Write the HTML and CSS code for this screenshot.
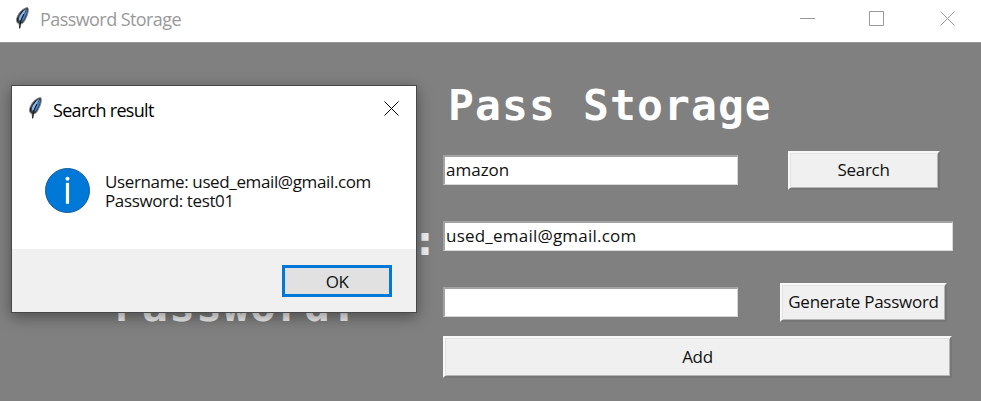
FILE: index.html
```
<!DOCTYPE html>
<html lang="en">
<head>
<meta charset="utf-8">
<title>Password Storage</title>
<link rel="stylesheet" href="styles.css">
</head>
<body>
<svg class="defs" width="0" height="0" aria-hidden="true">
  <symbol id="feather" viewBox="0 0 16 24">
    <path d="M13 .8C9 1.500 4 6 2.300 11c-1 2.700-1 5 .3 6.300l1.800 1.200L5 23l.9-4.500c2.400-.3 4.200-2.700 5.400-5.500 1.400-3 2.700-5.500 2.900-9C14.400 2 14 1 13 .8Z" fill="#3c4148" stroke="#85888b" stroke-width="1"/>
    <path d="M11.800 2.500C8.500 4.500 5.500 8 4.300 12l-.2 3 1.900-1C8 11 10 7 11.800 2.500Z" fill="#8fb9e8"/>
    <path d="M12.800 3C10 6.500 7.500 11 6.200 16.300c2.400-1 4-4 5.200-6.800.8-2 1.600-4 1.400-6.500Z" fill="#3f80cf"/>
    <path d="M9.500 8C7 12 5.400 16 4.900 23" fill="none" stroke="#111820" stroke-width="1.200"/>
    <path d="M2.800 11.500v4M8.500 4l-3 4.200" fill="none" stroke="#111820" stroke-width="1"/>
  </symbol>
</svg>
<header class="titlebar">
  <svg class="feather"><use href="#feather"/></svg>
  <span class="window-title">Password Storage</span>
  <svg class="controls" width="158" height="16" viewBox="0 0 158 16" fill="none" stroke="#999" stroke-width="1">
    <path d="M0 7.500h15M69.500.5h14v14h-14zM140.500.5l14 14M154.500.5l-14 14"/>
  </svg>
</header>
<main class="form">
  <h1 class="heading">Pass Storage</h1>
  <div class="entry"><span class="t-amazon">amazon</span></div>
  <button class="button search">Search</button>
  <label class="label colon">:</label>
  <div class="entry wide"><span class="t-email">used_email@gmail.com</span></div>
  <label class="label">Password:</label>
  <div class="entry"></div>
  <button class="button generate">Generate Password</button>
  <button class="button add">Add</button>
</main>
<section class="dialog" role="dialog">
  <div class="dialog-bar">
    <svg class="feather"><use href="#feather"/></svg>
    <span class="dialog-title">Search result</span>
    <svg class="close" width="16" height="16" viewBox="0 0 16 16" fill="none" stroke="#000" stroke-width="1"><path d="M.5.5l14 14M14.500.5l-14 14"/></svg>
  </div>
  <div class="dialog-body">
    <svg class="info" width="46" height="46" viewBox="0 0 46 46">
      <circle cx="22.500" cy="23.500" r="22" fill="#0078d7" stroke="#175c9c" stroke-width="1"/>
      <circle cx="22.500" cy="11.800" r="2" fill="#fff"/>
      <path d="M22.500 15.800v21" stroke="#fff" stroke-width="3.200"/>
    </svg>
    <div class="message"><div class="m1">Username: used_email@gmail.com</div><div class="m2">Password: test01</div></div>
  </div>
  <div class="dialog-footer"><button class="ok">OK</button></div>
</section>
</body>
</html>
```
FILE: styles.css
```
* { box-sizing: border-box; }
body {
  margin: 0;
  width: 981px;
  height: 401px;
  position: relative;
  overflow: hidden;
  background: #808080;
  color: #111;
  font-family: "Open Sans", "Noto Sans", sans-serif;
  font-size: 17px;
}
.defs { position: absolute; }
.titlebar {
  height: 43px;
  padding: 0 23px 4px 15px;
  display: flex;
  align-items: center;
  background: #fff;
  border-bottom: 1px solid #999;
}
.feather { width: 15px; height: 24px; flex: none; margin-top: -3px; }
.window-title {
  margin: 0 0 0 10px;
  font-size: 18px;
  letter-spacing: -.57px;
  color: #999;
  white-space: nowrap;
}
.controls { margin-left: auto; flex: none; margin-top: -1px; }
.form {
  display: grid;
  grid-template-columns: 410px 331px 179px;
  grid-template-rows: 59px 66px 66px 66px 43px;
  padding: 35px 0 0 33px;
  align-items: center;
}
.heading, .label {
  margin: 0;
  font: bold 43px/54px "DejaVu Sans Mono", monospace;
  letter-spacing: 1.100px;
  color: #fff;
  white-space: nowrap;
}
.heading { grid-column: 2 / 4; padding-left: 5px; margin-top: -5px; }
.label { grid-column: 1; padding: 7px 3px 0 0; text-align: center; color: #f0f0f0; }
.colon { text-align: right; padding-right: 4px; }
.entry {
  grid-column: 2;
  width: 295px;
  height: 30px;
  padding: 0 0 1px 1px;
  display: flex;
  align-items: center;
  line-height: 24px;
  background: #fff;
  border: 1px solid #d8d8d8;
  border-top: 2px solid #a3a3a3;
  border-left: 2px solid #a3a3a3;
}
.entry.wide { width: 510px; grid-column: 2 / 4; }
.t-amazon { letter-spacing: 0; }
.t-email { letter-spacing: .22px; }
.button {
  justify-self: center;
  padding: 0;
  height: 39px;
  background: #f0f0f0;
  color: #111;
  font: 17px/24px "Open Sans", "Noto Sans", sans-serif;
  letter-spacing: -.3px;
  white-space: nowrap;
  border: 2px solid;
  border-color: #f8f8f8 #777 #777 #f8f8f8;
  box-shadow: inset 1px 1px #e3e3e3, inset -1px -1px #b5b5b5;
}
.search { width: 152px; }
.generate { width: 167px; letter-spacing: -.26px; }
.add { grid-column: 2 / 4; justify-self: start; width: 509px; height: 42px; }
.dialog {
  position: absolute;
  left: 11px;
  top: 85px;
  width: 406px;
  height: 228px;
  background: #fff;
  border: 1px solid #48484a;
  box-shadow: 0 4px 14px rgba(0, 0, 0, .4);
}
.dialog-bar { height: 48px; padding: 0 16px 0 16px; display: flex; align-items: center; }
.dialog-title { margin: -1px 0 0 10px; font-size: 18px; letter-spacing: -.7px; color: #000; }
.dialog-bar .feather { margin-top: -4px; }
.close { margin: -3px 0 0 auto; }
.dialog-body { height: 115px; padding: 33px 0 0 33px; display: flex; align-items: flex-start; }
.info { flex: none; }
.message { margin: 5px 0 0 14px; line-height: 19px; white-space: nowrap; }
.m1, .m2 { letter-spacing: -.37px; }
.dialog-footer { height: 63px; padding: 16px 24px; display: flex; justify-content: flex-end; background: #f0f0f0; }
.ok {
  width: 110px;
  height: 32px;
  padding: 1px 0 0;
  background: #e1e1e1;
  border: 3px solid #0078d7;
  color: #111;
  font: 17px/24px "Open Sans", "Noto Sans", sans-serif;
  letter-spacing: -.5px;
}
```
